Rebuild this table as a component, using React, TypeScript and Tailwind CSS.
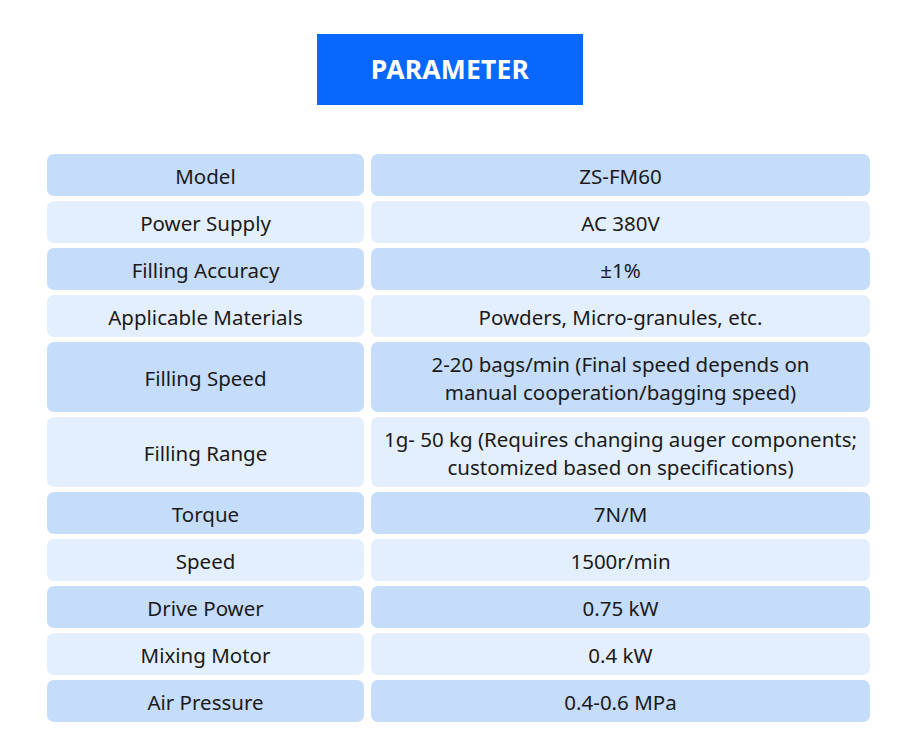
// 参数表页面
const ROWS: { label: string; value: string[]; tall?: boolean }[] = [
  { label: 'Model', value: ['ZS-FM60'] },
  { label: 'Power Supply', value: ['AC 380V'] },
  { label: 'Filling Accuracy', value: ['±1%'] },
  { label: 'Applicable Materials', value: ['Powders, Micro-granules, etc.'] },
  {
    label: 'Filling Speed',
    value: ['2-20 bags/min (Final speed depends on', 'manual cooperation/bagging speed)'],
    tall: true,
  },
  {
    label: 'Filling Range',
    value: ['1g- 50 kg (Requires changing auger components;', 'customized based on specifications)'],
    tall: true,
  },
  { label: 'Torque', value: ['7N/M'] },
  { label: 'Speed', value: ['1500r/min'] },
  { label: 'Drive Power', value: ['0.75 kW'] },
  { label: 'Mixing Motor', value: ['0.4 kW'] },
  { label: 'Air Pressure', value: ['0.4-0.6 MPa'] },
]

export default function App() {
  return (
    <div
      className="w-[900px] h-[748px] bg-white pt-[34px]"
      style={{ fontFamily: '"Noto Sans", "Open Sans", sans-serif' }}
    >
      {/* 标题 */}
      <div className="flex justify-center">
        <div className="w-[266px] h-[71px] bg-[#0867fd] flex items-center justify-center">
          <span className="text-white font-bold text-[26.5px] tracking-[0.2px]">PARAMETER</span>
        </div>
      </div>

      {/* 表格 */}
      <div className="ml-[47px] mt-[49px] w-[823px] flex flex-col gap-[5px]">
        {ROWS.map((row, i) => {
          const bg = i % 2 === 0 ? 'bg-[#c5dcfa]' : 'bg-[#e4effd]'
          return (
            <div key={row.label} className={`flex gap-[7px] ${row.tall ? 'h-[70px]' : 'h-[42px]'}`}>
              <div
                className={`w-[317px] ${bg} rounded-[7px] flex items-center justify-center pt-[2px] text-[20.5px] text-[#1a1a1a]`}
              >
                {row.label}
              </div>
              <div
                className={`flex-1 ${bg} rounded-[7px] flex flex-col items-center justify-center pt-[2px] text-[20.5px] leading-[28px] text-[#1a1a1a]`}
              >
                {row.value.map((v) => (
                  <span key={v}>{v}</span>
                ))}
              </div>
            </div>
          )
        })}
      </div>
    </div>
  )
}
